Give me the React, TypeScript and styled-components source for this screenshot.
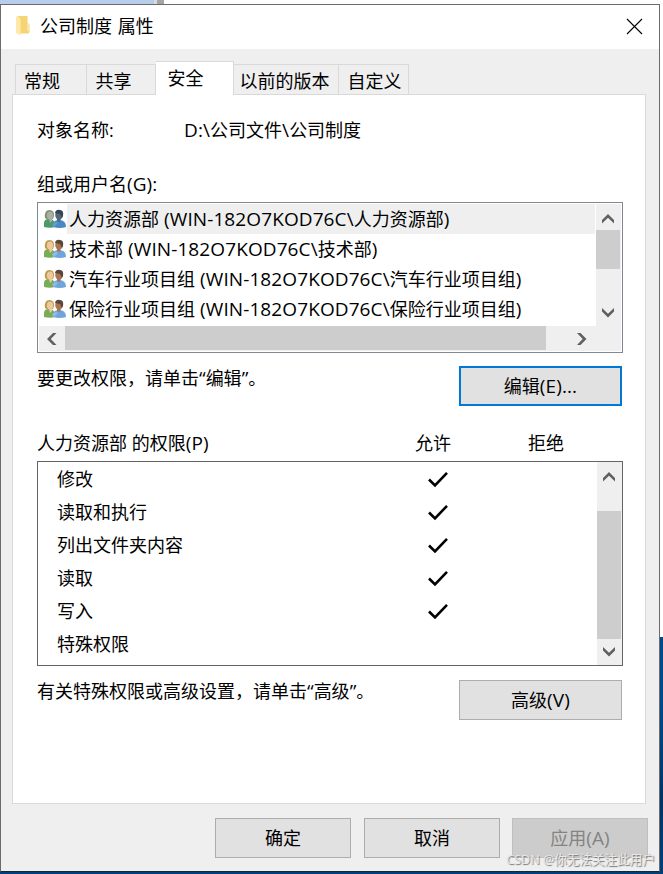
import React from "react";
import styled, { createGlobalStyle } from "styled-components";

const GlobalStyle = createGlobalStyle`
  * { box-sizing: border-box; }
  body { margin: 0; overflow: hidden; background: #fff; }
  button { padding: 0; font: inherit; }
`;

const Desktop = styled.div`
  position: relative;
  width: 663px;
  height: 874px;
  overflow: hidden;
  display: grid;
  grid-template-rows: 4px 868px;
  background: linear-gradient(to bottom, #fff 637px, #004a8c 637px, #004a8c 700px, #003464 800px, #004078 100%);
  font-family: "Open Sans", "Noto Sans CJK SC", sans-serif;
  font-size: 18px;
  font-weight: 400;
  line-height: 24px;
  color: #000;
  white-space: nowrap;
`;

const Backdrop = styled.div`
  background: linear-gradient(to right, #b7cde9 154px, #d8dce0 154px, #d8dce0 157px, #a5a5a5 157px, #a5a5a5 164px, #fff 164px);
`;

const Dialog = styled.section`
  width: 660px;
  display: flex;
  flex-direction: column;
  background: #efefef;
  border: 1px solid #6b6b6d;
  border-bottom-color: #14283c;
`;

const TitleBar = styled.header`
  height: 44px;
  flex: none;
  display: flex;
  align-items: center;
  padding: 0 16px 2px 14px;
  background: #fff;
`;

const Title = styled.h1`
  flex: 1;
  margin: 0 0 0 9px;
  font-size: 18px;
  line-height: 24px;
  font-weight: inherit;
  word-spacing: 1px;
`;

const CloseButton = styled.button`
  display: flex;
  border: 0;
  background: none;
`;

const Tabs = styled.nav`
  height: 46px;
  flex: none;
  display: flex;
  align-items: flex-end;
  padding-left: 14px;
  position: relative;
  z-index: 1;
`;

const Tab = styled.button<{ $width: number; $active?: boolean }>`
  width: ${(p) => p.$width}px;
  height: ${(p) => (p.$active ? 34 : 31)}px;
  flex: none;
  line-height: 28px;
  text-align: center;
  border: 1px solid #d9d9d9;
  border-bottom: ${(p) => (p.$active ? "0" : "1px solid #d9d9d9")};
  background: ${(p) => (p.$active ? "#fff" : "#efefef")};
  & + & { border-left-width: ${(p) => (p.$active ? 1 : 0)}px; }
  color: #000;
`;

const TabText = styled.span<{ $shift?: number; $active?: boolean }>`
  display: block;
  margin-right: ${(p) => p.$shift ?? 0}px;
  padding-top: ${(p) => (p.$active ? 0 : 2)}px;
  padding-bottom: ${(p) => (p.$active ? 1 : 0)}px;
`;

const Panel = styled.main`
  width: 634px;
  height: 710px;
  flex: none;
  margin: -1px 0 0 11px;
  padding: 23px 23px 0 24px;
  border: 1px solid #d9d9d9;
  background: #fff;
`;

const ObjectRow = styled.div`
  display: grid;
  grid-template-columns: 147px 1fr;
  height: 54px;
`;

const Label = styled.div`
  height: 30px;
`;

const Latin = styled.span`
  font-size: 19px;
  letter-spacing: 0.1px;
`;

const Quote = styled.span`
  font-size: 19px;
`;

const GroupList = styled.div`
  height: 151px;
  width: 586px;
  border: 1px solid #828790;
  padding: 1px;
  display: grid;
  grid-template-columns: 557px 25px;
  grid-template-rows: 122px 25px;
  background: #fff;
`;

const GroupRows = styled.ul`
  margin: 0;
  padding: 0 0 0 4px;
  list-style: none;
`;

const GroupRow = styled.li`
  height: 30px;
  display: flex;
  align-items: center;
`;

const GroupName = styled.span<{ $selected?: boolean }>`
  flex: 1;
  height: 30px;
  margin: 0 1px;
  padding: 3px 0 0 2px;
  background: ${(p) => (p.$selected ? "#efefef" : "transparent")};
`;

const VerticalBar = styled.div<{ $before: number; $thumb: number }>`
  display: grid;
  grid-template-rows: ${(p) => p.$before}px ${(p) => p.$thumb}px 1fr;
  justify-items: center;
  align-items: end;
  background: #efefef;
  padding-right: 1px;
`;

const ArrowSlot = styled.span<{ $end?: boolean }>`
  height: 26px;
  display: flex;
  align-items: center;
  align-self: ${(p) => (p.$end ? "end" : "start")};
  padding-top: ${(p) => (p.$end ? 0 : 4)}px;
`;

const HorizontalBar = styled.div`
  grid-column: 1 / 3;
  display: grid;
  grid-template-columns: 26px 481px 75px;
  align-items: center;
  justify-items: center;
  background: #efefef;
`;

const Thumb = styled.span`
  width: 100%;
  height: 100%;
  background: #cdcdcd;
`;

const HorizontalThumb = styled(Thumb)`
  height: 24px;
  align-self: start;
`;

const RightArrow = styled.span`
  display: flex;
  justify-self: end;
  margin-right: 34px;
`;

const ActionRow = styled.div<{ $lower?: boolean }>`
  display: flex;
  justify-content: space-between;
  padding-top: ${(p) => (p.$lower ? 14 : 13)}px;
  height: 77px;
`;

const Hint = styled.span<{ $raise?: boolean }>`
  margin-top: ${(p) => (p.$raise ? -1 : 0)}px;
`;

const Button = styled.button<{ $wide?: boolean; $tone?: "default" | "disabled" }>`
  width: ${(p) => (p.$wide ? 163 : 136)}px;
  height: 40px;
  flex: none;
  border: ${(p) => (p.$tone === "default" ? "2px solid #0078d7" : p.$tone === "disabled" ? "1px solid #bfbfbf" : "1px solid #adadad")};
  background: ${(p) => (p.$tone === "disabled" ? "#cccccc" : "#e1e1e1")};
  color: ${(p) => (p.$tone === "disabled" ? "#838383" : "#000")};
`;

const PermissionHead = styled.div`
  height: 31px;
  padding-top: 1px;
  display: grid;
  grid-template-columns: 378px 113px 1fr;
`;

const PermissionBox = styled.div`
  width: 586px;
  height: 205px;
  border: 1px solid #646464;
  display: grid;
  grid-template-columns: 1fr 25px;
`;

const PermissionRows = styled.ul`
  margin: 0;
  padding: 1px 0 0 19px;
  list-style: none;
`;

const PermissionRow = styled.li`
  height: 33px;
  display: grid;
  grid-template-columns: 370px 24px;
  align-items: center;
`;

const PermissionName = styled.span`
  padding-bottom: 2px;
`;

const Footer = styled.footer`
  display: flex;
  justify-content: flex-end;
  gap: 13px;
  padding: 14px 11px 0 0;
  & > :last-child { margin-left: -1px; }
`;

const Watermark = styled.div`
  position: absolute;
  right: 8px;
  bottom: 4px;
  font-size: 12.6px;
  line-height: 20px;
  color: #e8e8e8;
  text-shadow: 1px 1px 1px #777;
`;

const FolderIcon = () => (
  <svg width="16" height="22" viewBox="0 0 16 22">
    <path d="M3 1h9.500v7l2 1.500v8l-1.500 1H3z" fill="#f6d476" />
    <path d="M12 9h2v7h-2z" fill="#fbe3a0" />
    <path d="M1 1l4.500 2.500V20.500L1 18z" fill="#ffe9a9" />
  </svg>
);

const CloseIcon = () => (
  <svg width="17" height="17" viewBox="0 0 17 17">
    <path d="M1 1l15 15M16 1L1 16" stroke="#000" strokeWidth="1.1" />
  </svg>
);

const PeopleIcon = ({ muted }: { muted?: boolean }) => (
  <svg width="23" height="20" viewBox="0 0 23 20">
    <path d="M1 18v-4q0-4 5-4t6 5v3q-5 1.500-11 0z" fill={muted ? "#4c9a6c" : "#78ad55"} />
    <path d="M2 9Q1 1 6.500 1q5 0 4.500 6l-1 3-5 1z" fill={muted ? "#84906b" : "#bb9c4b"} />
    <ellipse cx="7" cy="6.5" rx="3.1" ry="4.1" fill={muted ? "#a9b0a7" : "#edc99e"} />
    <path d="M6 10l3-1v3l-2 2z" fill={muted ? "#a9b0a7" : "#edc99e"} />
    <path d="M10 18q-1-7 6-7 7 0 7 7-6 2-13 0z" fill={muted ? "#4888c5" : "#6fa5dc"} />
    <path d="M14 9h4l-1 4-3-1z" fill={muted ? "#53677a" : "#a87550"} />
    <ellipse cx="16" cy="6" rx="3.8" ry="4.7" fill={muted ? "#53677a" : "#a87550"} />
    <path d="M12 4q1-4 5-3 4 0 3 6l-1 2-2-4z" fill={muted ? "#344451" : "#5a4638"} />
    <path d="M9 15l4-2 2 1-4 4z" fill={muted ? "#659fc9" : "#91bde5"} />
  </svg>
);

type Direction = "up" | "down" | "left" | "right";
const arrowPoints: Record<Direction, string> = {
  up: "6,0 12,6 12,9.5 6,3.8 0,9.5 0,6",
  down: "0,0 6,5.7 12,0 12,3.5 6,9.5 0,3.5",
  left: "6,0 9.5,0 3.8,6 9.5,12 6,12 0,6",
  right: "0,0 3.5,0 9.5,6 3.5,12 0,12 5.7,6",
};
const Arrow = ({ dir }: { dir: Direction }) => {
  const vertical = dir === "up" || dir === "down";
  return (
    <svg width={vertical ? 12 : 10} height={vertical ? 10 : 12}>
      <polygon points={arrowPoints[dir]} fill="#606060" />
    </svg>
  );
};

const Check = () => (
  <svg width="22" height="18" viewBox="0 0 22 18">
    <path d="M2 8.5l6 6L20 1.8" fill="none" stroke="#000" strokeWidth="2.6" />
  </svg>
);

const groups = ["人力资源部", "技术部", "汽车行业项目组", "保险行业项目组"];
const permissions: [string, boolean][] = [
  ["修改", true],
  ["读取和执行", true],
  ["列出文件夹内容", true],
  ["读取", true],
  ["写入", true],
  ["特殊权限", false],
];

export default function App() {
  return (
    <Desktop>
      <GlobalStyle />
      <Backdrop />
      <Dialog>
        <TitleBar>
          <FolderIcon />
          <Title>公司制度 属性</Title>
          <CloseButton aria-label="关闭"><CloseIcon /></CloseButton>
        </TitleBar>
        <Tabs>
          <Tab $width={72}><TabText $shift={18}>常规</TabText></Tab>
          <Tab $width={69}><TabText $shift={15}>共享</TabText></Tab>
          <Tab $width={78} $active><TabText $shift={18} $active>安全</TabText></Tab>
          <Tab $width={105}><TabText $shift={3}>以前的版本</TabText></Tab>
          <Tab $width={70}><TabText $shift={-2}>自定义</TabText></Tab>
        </Tabs>
        <Panel>
          <ObjectRow>
            <span>对象名称:</span>
            <span><Latin>D:\</Latin>公司文件<Latin>\</Latin>公司制度</span>
          </ObjectRow>
          <Label>组或用户名<Latin>(G):</Latin></Label>
          <GroupList>
            <GroupRows>
              {groups.map((name, i) => (
                <GroupRow key={name}>
                  <PeopleIcon muted={i === 0} />
                  <GroupName $selected={i === 0}>
                    {name}<Latin> (WIN-182O7KOD76C\</Latin>{name}<Latin>)</Latin>
                  </GroupName>
                </GroupRow>
              ))}
            </GroupRows>
            <VerticalBar $before={26} $thumb={39}>
              <ArrowSlot><Arrow dir="up" /></ArrowSlot>
              <Thumb />
              <ArrowSlot $end><Arrow dir="down" /></ArrowSlot>
            </VerticalBar>
            <HorizontalBar>
              <Arrow dir="left" />
              <HorizontalThumb />
              <RightArrow><Arrow dir="right" /></RightArrow>
            </HorizontalBar>
          </GroupList>
          <ActionRow>
            <Hint>要更改权限，请单击<Quote>“</Quote>编辑<Quote>”</Quote>。</Hint>
            <Button $wide $tone="default">编辑<Latin>(E)...</Latin></Button>
          </ActionRow>
          <PermissionHead>
            <span>人力资源部 的权限<Latin>(P)</Latin></span>
            <span>允许</span>
            <span>拒绝</span>
          </PermissionHead>
          <PermissionBox>
            <PermissionRows>
              {permissions.map(([name, allowed]) => (
                <PermissionRow key={name}>
                  <PermissionName>{name}</PermissionName>
                  {allowed && <Check />}
                </PermissionRow>
              ))}
            </PermissionRows>
            <VerticalBar $before={49} $thumb={128}>
              <ArrowSlot><Arrow dir="up" /></ArrowSlot>
              <Thumb />
              <ArrowSlot $end><Arrow dir="down" /></ArrowSlot>
            </VerticalBar>
          </PermissionBox>
          <ActionRow $lower>
            <Hint $raise>有关特殊权限或高级设置，请单击<Quote>“</Quote>高级<Quote>”</Quote>。</Hint>
            <Button $wide>高级<Latin>(V)</Latin></Button>
          </ActionRow>
        </Panel>
        <Footer>
          <Button>确定</Button>
          <Button>取消</Button>
          <Button $tone="disabled">应用<Latin>(A)</Latin></Button>
        </Footer>
      </Dialog>
      <Watermark>CSDN @你无法关注此用户</Watermark>
    </Desktop>
  );
}
